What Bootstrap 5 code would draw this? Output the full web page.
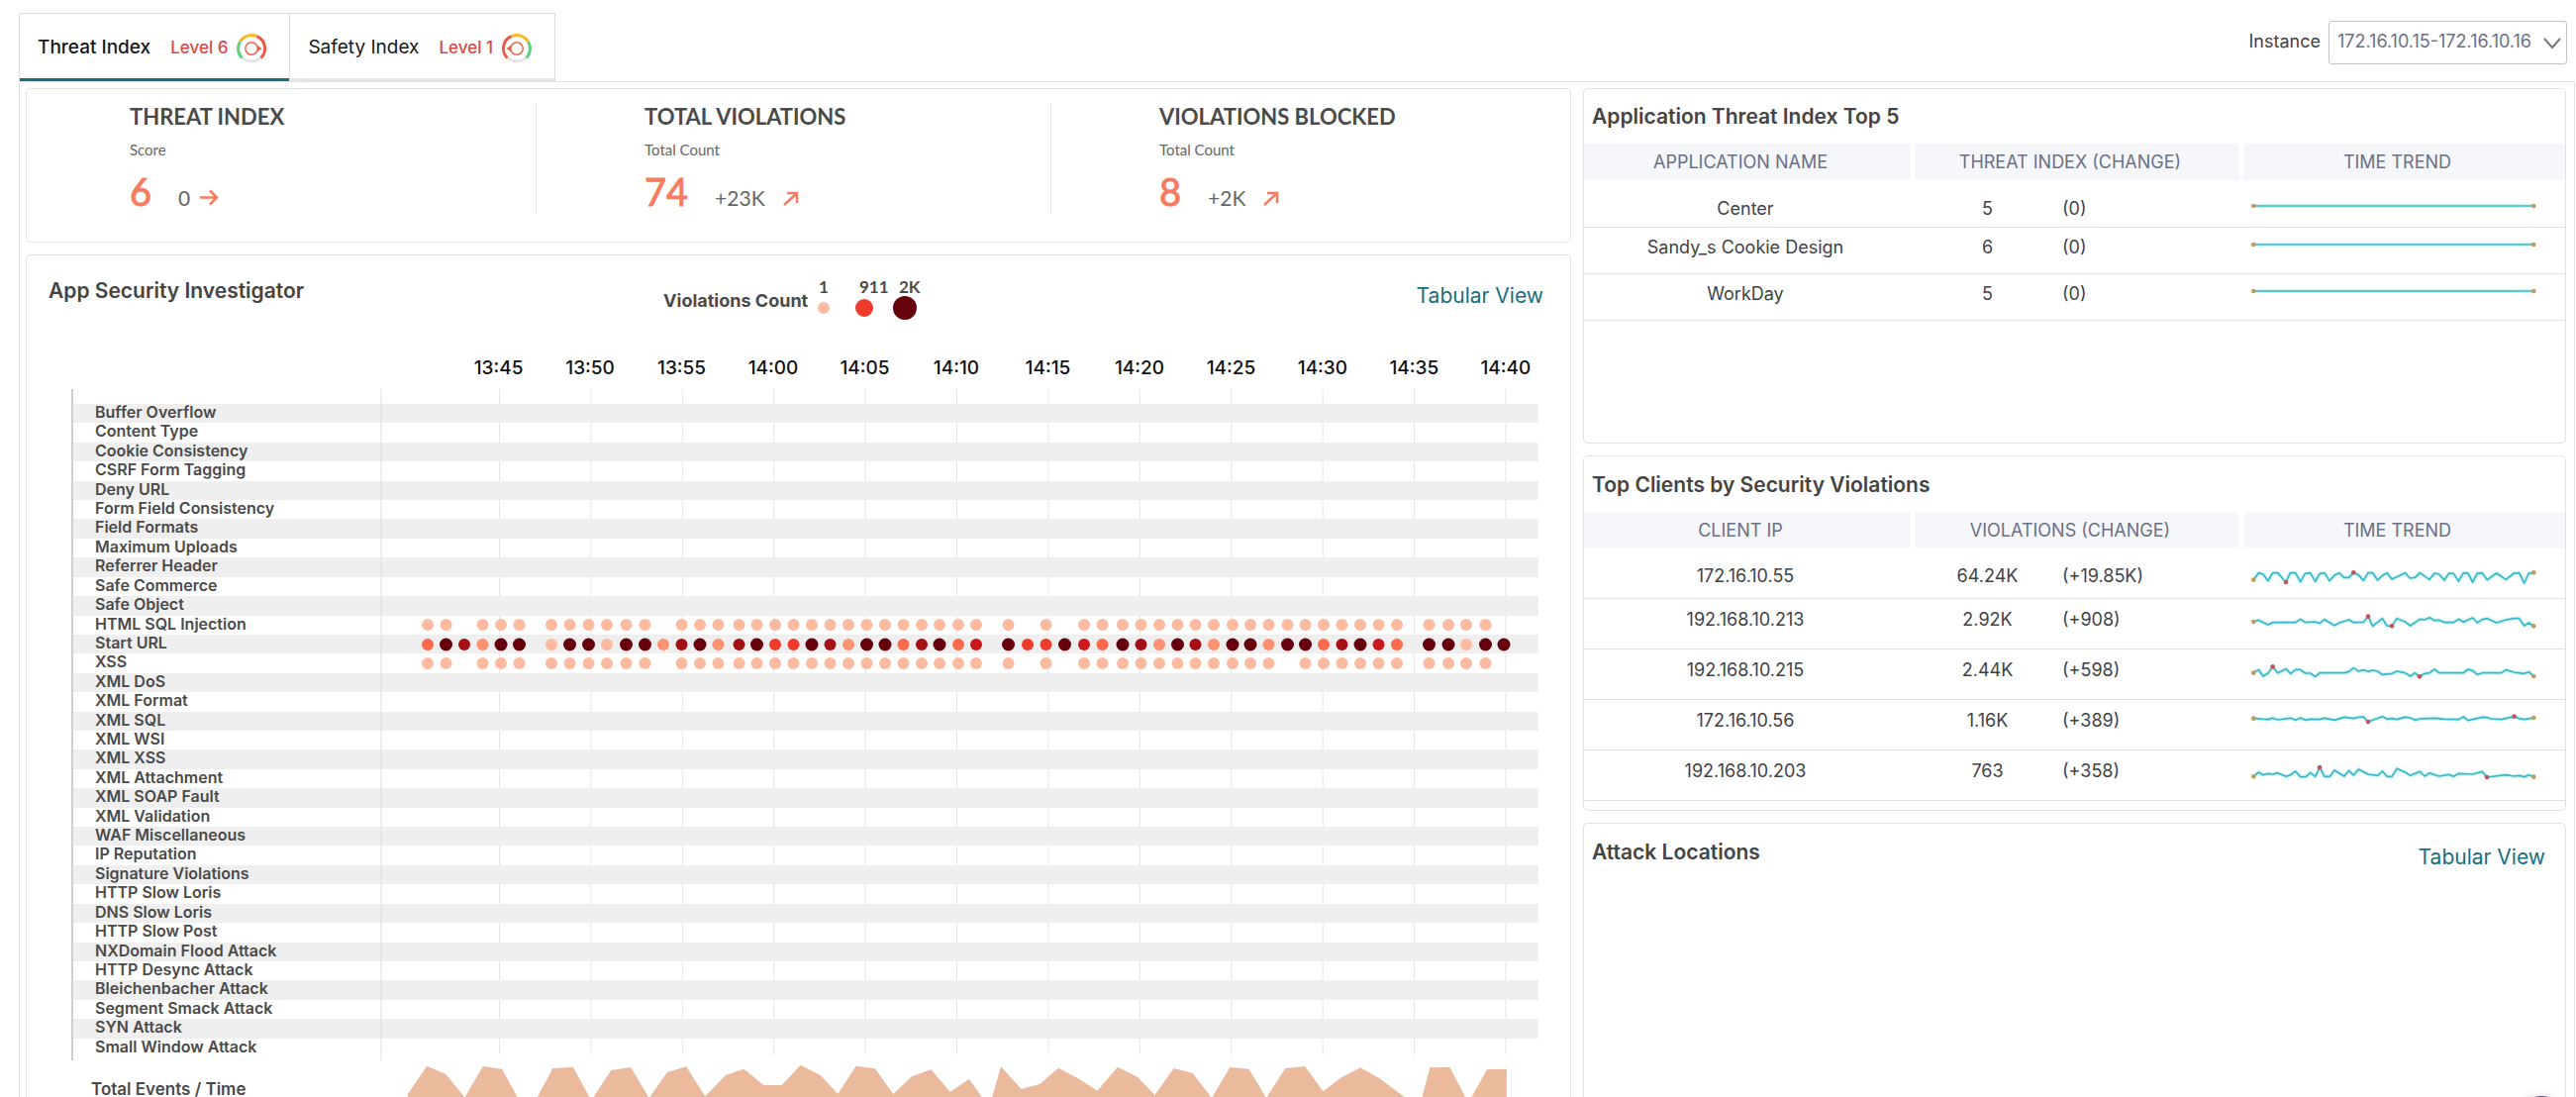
<!DOCTYPE html>
<html lang="en">
<head>
<meta charset="utf-8">
<meta name="viewport" content="width=device-width, initial-scale=1">
<title>Threat Index</title>
<link href="https://cdn.jsdelivr.net/npm/bootstrap@5.3.0/dist/css/bootstrap.min.css" rel="stylesheet">
<style>
  body { font-family: Inter, "Liberation Sans", sans-serif; font-size: 18px; color: #3f4247; }
  .topbar { padding: 13px 9px 0 19px; }
  .index-tabs { border: 1px solid #dcdcdc; border-bottom: 0; }
  .index-tabs .nav-link { height: 68px; padding: 4px 22px 0 18px; border: 0; border-radius: 0; border-bottom: 3px solid #e6e6e6; color: #16181b; font-size: 19px; background: #fff; }
  .index-tabs .nav-item + .nav-item { border-left: 1px solid #dcdcdc; }
  .index-tabs .nav-link.active { border-bottom-color: #17717f; font-weight: 500; }
  .level { color: #d64a48; font-size: 17px; font-weight: 500; margin: 0 8px 0 20px; }
  .instance-box { width: 241px; }
  .instance-box .form-select { height: 44px; padding: 0 30px 4px 8px; border-color: #c4c4c8; border-radius: 3px; background-image: none; color: #6c7086; font-size: 18px; }
  .instance-box svg { position: absolute; right: 6px; top: 17px; pointer-events: none; }
  .frame { margin: 0 1px 0 19px; padding: 6px 8px 0 6px; border: 1px solid #e2e2e2; border-bottom: 0; gap: 12px; min-height: 0; }
  .col-left { flex: 1561 1 0; min-width: 0; gap: 12px; }
  .col-right { flex: 993 1 0; min-width: 0; gap: 12px; }
  .panel { background: #fff; border: 1px solid #e2e2e2; border-radius: 5px; }
  .panel-open { border-bottom: 0; border-bottom-left-radius: 0; border-bottom-right-radius: 0; }
  .stats { padding: 15px 0 28px; font-family: Lato, sans-serif; }
  .stat { flex: 1 1 0; margin-right: 5px; padding-left: 104px; border-right: 1px solid #e2e2e2; }
  .stat:last-child { border-right: 0; }
  .stat h2 { font-size: 22px; line-height: 26px; font-weight: 700; color: #4a4a4a; margin: 0 0 10px; }
  .stat p { font-size: 15px; line-height: 20px; color: #666; margin: 0 0 9px; }
  .stat-num { font-size: 38px; line-height: 46px; color: #f67c61; margin-right: 27px; -webkit-text-stroke: 1px #f67c61; }
  .stat-diff { font-size: 21px; color: #666; margin-right: 10px; }
  .panel-title { font-size: 21px; line-height: 26px; font-weight: 600; color: #444; margin: 0; }
  .tab-view { font-size: 21px; line-height: 26px; color: #176f7f; text-decoration: none; padding-top: 5px; }
  .inv-head { padding: 18px 27px 0 22px; height: 94px; }
  .inv-head .panel-title { width: 41%; padding-top: 5px; }
  .inv-head .tab-view { padding-top: 10px; }
  .legend-label { font-weight: 700; color: #4a4a4a; padding: 14px 0 0 2px; margin-right: 9px; }
  .legend-svg text { font: 700 17px Lato, sans-serif; fill: #4a4a4a; }
  .chart { margin: 0 32px 0 45px; }
  .times { height: 41px; }
  .times text { font-size: 19px; font-weight: 500; fill: #111; text-anchor: middle; }
  .plot-side { margin-left: 312px; }
  .plot-rows { padding: 15px 0 3px; border-left: 2px solid #cfcfcf; }
  .row-grid { display: grid; grid-template-rows: repeat(34, 1fr); height: 660px; position: relative; }
  .rule-name { font-size: 16px; line-height: 16px; font-weight: 600; color: #4a4a4a; padding-left: 22px; white-space: nowrap; }
  .rule-name:nth-child(odd) { background: #efefef; }
  .plot-lines, .plot-dots { position: absolute; top: 0; left: 311px; width: calc(100% - 311px); height: 100%; overflow: visible; }
  .totals { height: 38px; }
  .totals-label { width: 312px; padding: 20px 0 0 20px; font-size: 17px; line-height: 18px; font-weight: 600; color: #4a4a4a; }
  .totals svg { flex: 1; height: 38px; }
  .side-panel { min-height: 359px; }
  .side-head { padding: 15px 20px 15px 8px; height: 55px; }
  .side-head.roomy-head { padding-top: 16px; height: 56px; }
  .data-tbl { table-layout: fixed; width: 100%; color: #3f4247; }
  .data-tbl th { width: 33%; height: 37px; padding: 0 14px 0 0; background: #f5f7fb; color: #6b7087; font-weight: 400; text-align: center; border-right: 4px solid #fff; }
  .data-tbl.roomy th { height: 36px; }
  .data-tbl th:first-child, .data-tbl th:nth-child(2) { width: 33.5%; }
  .data-tbl th:last-child { border-right: 0; }
  .data-tbl td { height: 47px; padding: 8px 0 0; line-height: 24px; vertical-align: top; text-align: center; border-bottom: 1px solid #e0e0e0; }
  .data-tbl td:first-child { padding-right: 6px; }
  .data-tbl.roomy td { height: 51px; padding-top: 9px; }
  .data-tbl tbody tr:first-child td { padding-top: 17px; }
  .val { width: 151px; text-align: center; }
  .spark { display: block; height: 24px; width: 292px; margin-left: 8px; overflow: visible; }
  .roomy .spark { margin-top: -1px; }
  .help-dot { position: fixed; right: 10px; bottom: -49px; width: 50px; height: 50px; border: 0; border-radius: 50%; background: #5b3a96; box-shadow: 0 0 10px rgba(0,0,0,.15); }
</style>
<script src="https://cdn.jsdelivr.net/npm/bootstrap@5.3.0/dist/js/bootstrap.bundle.min.js"></script>
</head>
<body class="vh-100 d-flex flex-column overflow-hidden bg-white">
<header class="topbar d-flex justify-content-between align-items-start">
  <ul class="nav index-tabs" role="tablist">
    <li class="nav-item"><button type="button" role="tab" aria-selected="true" class="nav-link active d-flex align-items-center">Threat Index<span class="level">Level 6</span>
      <svg width="32" height="32" viewBox="0 0 32 32" fill="none" stroke-width="3"><path d="M6 24.5A13.5 13.5 0 0 0 26 24.5" stroke="#e4e4e4"/><path d="M6.4 25.5A13.5 13.5 0 0 1 4.5 9" stroke="#5fd17a"/><path d="M4.5 9A13.5 13.5 0 0 1 21.5 3.6" stroke="#fbb829"/><path d="M21.5 3.6A13.5 13.5 0 0 1 25.6 25.5" stroke="#ea5846"/><circle cx="16" cy="16" r="6.2" stroke="#ea6a50" stroke-width="1.5"/><path d="M22 13l4.5 3-4.5 3z" fill="#ea5846"/></svg></button></li>
    <li class="nav-item"><button type="button" role="tab" aria-selected="false" class="nav-link d-flex align-items-center">Safety Index<span class="level">Level 1</span>
      <svg width="32" height="32" viewBox="0 0 32 32" fill="none" stroke-width="3"><path d="M6 24.5A13.5 13.5 0 0 0 26 24.5" stroke="#e4e4e4"/><path d="M25.6 25.5A13.5 13.5 0 0 0 27.5 9" stroke="#5fd17a"/><path d="M27.5 9A13.5 13.5 0 0 0 10.5 3.6" stroke="#fbb829"/><path d="M10.5 3.6A13.5 13.5 0 0 0 6.4 25.5" stroke="#ea5846"/><circle cx="16" cy="16" r="6.2" stroke="#ea6a50" stroke-width="1.5"/><path d="M10 13l-4.5 3 4.5 3z" fill="#ea5846"/></svg></button></li>
  </ul>
  <div class="d-flex align-items-center pt-2">
    <label for="instance" class="me-2 pb-1">Instance</label>
    <div class="instance-box position-relative">
      <select id="instance" class="form-select"><option>172.16.10.15-172.16.10.16</option></select>
      <svg width="18" height="12" viewBox="0 0 18 12" fill="none" stroke="#777" stroke-width="2"><path d="M1 1l8 9 8-9"/></svg>
    </div>
  </div>
</header>

<main class="frame d-flex flex-fill">
  <div class="col-left d-flex flex-column">
    <section class="panel stats d-flex">
      <div class="stat"><h2>THREAT INDEX</h2><p>Score</p>
        <div class="d-flex align-items-baseline"><span class="stat-num">6</span><span class="stat-diff">0</span><svg width="19" height="17" viewBox="0 0 19 17" fill="none" stroke="#f67c61" stroke-width="2.5"><path d="M0 8.5H17M10 1.5l7 7-7 7"/></svg></div></div>
      <div class="stat"><h2>TOTAL VIOLATIONS</h2><p>Total Count</p>
        <div class="d-flex align-items-baseline"><span class="stat-num">74</span><span class="stat-diff">+23K</span><svg class="ms-2" width="16" height="15" viewBox="0 0 16 15" fill="none" stroke="#f67c61" stroke-width="2.5"><path d="M1 14L14 2M4 2H14V12"/></svg></div></div>
      <div class="stat"><h2>VIOLATIONS BLOCKED</h2><p>Total Count</p>
        <div class="d-flex align-items-baseline"><span class="stat-num">8</span><span class="stat-diff">+2K</span><svg class="ms-2" width="16" height="15" viewBox="0 0 16 15" fill="none" stroke="#f67c61" stroke-width="2.5"><path d="M1 14L14 2M4 2H14V12"/></svg></div></div>
    </section>

    <section class="panel panel-open flex-fill">
      <div class="inv-head d-flex">
        <h2 class="panel-title">App Security Investigator</h2>
        <div class="d-flex align-items-start">
          <span class="legend-label">Violations Count</span>
          <svg class="legend-svg" width="120" height="60" viewBox="0 0 120 60"><text x="2" y="20">1</text><text x="43" y="20">911</text><text x="83" y="20">2K</text><circle cx="7" cy="35" r="6" fill="#fcbba1"/><circle cx="48" cy="35" r="9" fill="#ef3b2c"/><circle cx="89" cy="35" r="12" fill="#67000d"/></svg>
        </div>
        <a href="#" class="tab-view ms-auto">Tabular View</a>
      </div>
      <div class="chart">
        <div class="plot-side"><svg class="times w-100 d-block overflow-visible" id="times"></svg></div>
        <div class="plot-rows position-relative">
          <svg class="plot-lines" id="lines"></svg>
          <div class="row-grid" id="rules"></div>
          <svg class="plot-dots" id="dots"></svg>
        </div>
        <div class="totals d-flex">
          <div class="totals-label">Total Events / Time</div>
          <svg viewBox="385 1070 1169 38" preserveAspectRatio="none"><path id="area" fill="#ebba9d"/></svg>
        </div>
      </div>
    </section>
  </div>

  <div class="col-right d-flex flex-column">
    <section class="panel side-panel">
      <div class="side-head"><h2 class="panel-title">Application Threat Index Top 5</h2></div>
      <table class="data-tbl">
        <thead><tr><th>APPLICATION NAME</th><th>THREAT INDEX (CHANGE)</th><th>TIME TREND</th></tr></thead>
        <tbody id="apps"></tbody>
      </table>
    </section>
    <section class="panel side-panel">
      <div class="side-head roomy-head"><h2 class="panel-title">Top Clients by Security Violations</h2></div>
      <table class="data-tbl roomy">
        <thead><tr><th>CLIENT IP</th><th>VIOLATIONS (CHANGE)</th><th>TIME TREND</th></tr></thead>
        <tbody id="clients"></tbody>
      </table>
    </section>
    <section class="panel panel-open flex-fill">
      <div class="side-head roomy-head d-flex justify-content-between"><h2 class="panel-title">Attack Locations</h2><a href="#" class="tab-view">Tabular View</a></div>
    </section>
  </div>
</main>
<button type="button" class="help-dot" aria-label="Help"></button>

<script>
  const byId = id => document.getElementById(id);
  const PLOT_LEFT = 385, PLOT_WIDTH = 1169;
  const pct = x => ((x - PLOT_LEFT) / PLOT_WIDTH * 100).toFixed(3) + '%';

  // Violation categories
  byId('rules').innerHTML = ['Buffer Overflow','Content Type','Cookie Consistency','CSRF Form Tagging','Deny URL','Form Field Consistency','Field Formats','Maximum Uploads','Referrer Header','Safe Commerce','Safe Object','HTML SQL Injection','Start URL','XSS','XML DoS','XML Format','XML SQL','XML WSI','XML XSS','XML Attachment','XML SOAP Fault','XML Validation','WAF Miscellaneous','IP Reputation','Signature Violations','HTTP Slow Loris','DNS Slow Loris','HTTP Slow Post','NXDomain Flood Attack','HTTP Desync Attack','Bleichenbacher Attack','Segment Smack Attack','SYN Attack','Small Window Attack']
    .map(n => `<div class="rule-name">${n}</div>`).join('');

  // Time axis
  let labels = '', lines = '';
  ['13:45','13:50','13:55','14:00','14:05','14:10','14:15','14:20','14:25','14:30','14:35','14:40'].forEach((t, i) => {
    const x = pct(504.5 + i * 92.4);
    labels += `<text x="${x}" y="26">${t}</text>`;
    lines += `<line x1="${x}" x2="${x}" y1="0" y2="672" stroke="#e6e6e6"/>`;
  });
  byId('times').innerHTML = labels;
  byId('lines').innerHTML = lines;

  // Event dots
  const color = {A:'#fcbba1',B:'#fc9272',C:'#fb6a4a',D:'#ef3b2c',E:'#cb181d',F:'#a50f15',G:'#67000d'};
  const xs = [432,450.5,469,487.5,506,524.5,557,575.5,594.5,613,632.5,651.5,670,688.5,707,725.5,746.5,764.5,783,801.5,820,838.5,857,875.5,894,912.5,931,949,968,986,1018.5,1038,1056.5,1075.5,1095,1113.5,1134,1152.5,1171,1189.5,1207.5,1226,1245,1263,1281.5,1300.5,1318.5,1337,1355.5,1374,1392.5,1411,1443.5,1463,1481,1500.5,1519];
  const start = 'CGFBGGAGGAGGBFGBFGDDGFBGGCFGCEGDDGECGFBGFBGGBGGCFGECGGAGG';
  const gapsSql = [2, 12, 31, 33, 56], gapsXss = gapsSql.concat(45);
  let dots = `<line x1="0" x2="0" y1="0" y2="100%" stroke="#dedede"/>`;
  xs.forEach((x, i) => {
    if (!gapsSql.includes(i)) dots += `<circle cx="${pct(x)}" cy="238" r="6" fill="#fcbba1"/>`;
    dots += `<circle cx="${pct(x)}" cy="258" r="${start[i] === 'G' ? 6.5 : 6}" fill="${color[start[i]]}"/>`;
    if (!gapsXss.includes(i)) dots += `<circle cx="${pct(x)}" cy="277" r="6" fill="#fcbba1"/>`;
  });
  byId('dots').innerHTML = dots;

  // Total events area
  const area = [17,162,42,77,67,102,92,172,116,78,141,86,162,174,187,174,208,84,235,81,257,174,261,174,285,90,311,81,335,174,359,96,384,79,409,169,436,105,460,86,486,135,510,135,535,74,561,105,584,161,608,77,633,85,657,162,682,108,707,88,732,156,757,116,775,174,787,174,799,79,826,147,850,132,875,83,902,116,926,152,953,80,979,110,1002,165,1027,84,1052,99,1077,174,1101,81,1126,86,1149,174,1174,84,1200,78,1224,154,1248,112,1273,82,1298,114,1333,174,1354,174,1365,81,1391,81,1412,174,1419,174,1440,88,1466,86,1466,174,17,174];
  let d = '';
  for (let i = 0; i < area.length; i += 2) d += (i ? 'L' : 'M') + (400 + area[i] / 1.3067).toFixed(1) + ' ' + (1050 + area[i + 1] / 3).toFixed(1);
  byId('area').setAttribute('d', d + 'Z');

  // Trend tables: name, value, change, vertical centre, points, highlighted extremes
  const spark = (cy, pts, marks) => {
    const p = pts.split(' '), dot = (q, c) => `<circle cx="${q.split(',')[0]}" cy="${q.split(',')[1]}" r="7" fill="${c}"/>`;
    return `<svg class="spark" viewBox="96 ${cy - 36} 876 72"><g fill="none" stroke-linejoin="round"><polyline points="${pts}" stroke="#b9f5f5" stroke-width="12" opacity=".7"/><polyline points="${pts}" stroke="#3db4c6" stroke-width="5"/></g>${dot(p[0], '#c39a5b')}${dot(p[p.length - 1], '#c39a5b')}${marks.map(m => dot(m, '#c2545c')).join('')}</svg>`;
  };
  const rowHtml = r => `<tr><td>${r[0]}</td><td><div class="d-flex"><span class="val">${r[1]}</span><span>${r[2]}</span></div></td><td>${spark(r[3], r[4], r[5])}</td></tr>`;
  byId('apps').innerHTML = [['Center','5'],['Sandy_s Cookie Design','6'],['WorkDay','5']].map(a => rowHtml([a[0], a[1], '(0)', 9, '109,0 958,0', []])).join('');
  byId('clients').innerHTML = [
    ['172.16.10.55','64.24K','(+19.85K)',93,'109,107 124,86 138,90 153,110 167,86 182,86 207,114 220,86 236,86 251,113 265,88 281,86 296,112 309,89 324,86 339,110 354,93 369,86 383,100 398,100 412,85 427,92 442,109 456,86 470,86 485,108 499,94 514,86 528,105 568,86 583,102 598,100 613,86 642,106 657,87 671,90 687,108 701,87 715,88 730,111 745,86 759,87 773,114 787,87 802,86 817,107 845,87 874,106 898,87 914,86 929,117 943,87 958,85',['207,114','412,85']],
    ['192.168.10.213','2.92K','(+908)',222,'109,231 124,226 153,240 167,233 236,233 251,223 265,233 296,231 309,236 324,224 354,242 369,234 398,225 412,233 442,232 456,215 470,244 499,221 513,243 528,244 543,221 568,231 584,243 613,223 628,225 642,218 657,227 671,226 687,233 715,233 730,223 745,232 773,219 787,234 802,224 817,221 845,234 874,225 898,221 914,221 929,243 943,234 958,244',['456,215','528,244']],
    ['192.168.10.215','2.44K','(+598)',375,'109,386 124,376 138,396 153,387 167,367 182,386 207,374 221,388 236,376 251,376 265,387 281,387 296,397 309,386 384,386 398,382 412,371 427,381 442,377 456,382 470,378 485,381 499,391 528,388 543,381 568,386 584,396 598,386 612,397 628,388 642,386 657,375 671,386 745,386 759,375 773,379 787,391 802,386 860,386 874,377 898,384 929,388 943,383 958,396',['167,367','612,397']],
    ['172.16.10.56','1.16K','(+389)',528,'109,524 153,527 167,523 182,528 221,523 236,529 251,522 265,529 280,526 309,527 324,523 354,529 384,520 412,524 427,520 442,519 456,534 499,518 514,526 528,524 543,527 568,520 584,522 598,529 613,525 657,523 687,526 730,527 745,519 759,530 773,527 802,520 817,521 828,525 860,527 899,518 914,524 929,527 958,522',['456,534','899,518']],
    ['192.168.10.203','763','(+358)',678,'109,697 124,684 138,692 153,688 167,690 182,686 207,697 221,692 236,681 251,698 267,698 281,685 296,697 309,669 324,697 340,697 354,678 384,696 398,679 412,693 427,675 456,690 485,694 499,681 514,697 528,697 543,673 568,684 584,694 613,682 628,696 642,686 671,696 701,691 715,697 730,688 773,690 802,682 816,699 874,692 898,696 914,694 929,698 943,692 958,698',['309,669','816,699']]
  ].map(rowHtml).join('');
</script>
</body>
</html>
